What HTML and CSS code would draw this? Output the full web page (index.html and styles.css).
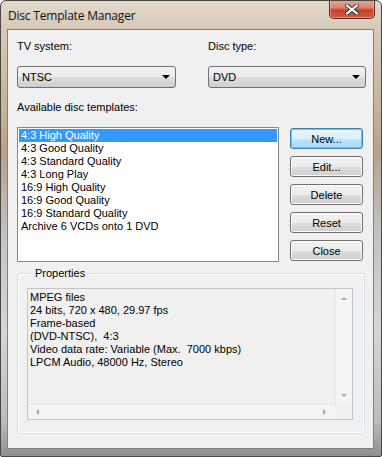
FILE: index.html
```html
<!DOCTYPE html>
<html lang="en">
<head>
    <meta charset="UTF-8">
    <title>Disc Template Manager</title>
    <link rel="stylesheet" href="styles.css">
</head>
<body>
    <div class="window">
        <div class="titlebar">
            <span class="title">Disc Template Manager</span>
            <div class="close-btn">
                <svg width="14" height="11" viewBox="0 0 14 11">
                    <path d="M2 1.5 L12 9.5 M12 1.5 L2 9.5" stroke="#2b3a4a" stroke-width="4" stroke-linecap="square"/>
                    <path d="M2 1.5 L12 9.5 M12 1.5 L2 9.5" stroke="#ffffff" stroke-width="2" stroke-linecap="square"/>
                </svg>
            </div>
        </div>

        <div class="client">
            <div class="selectors">
                <div class="field">
                    <div class="label">TV system:</div>
                    <div class="combo"><span>NTSC</span><span class="arrow"></span></div>
                </div>
                <div class="field">
                    <div class="label">Disc type:</div>
                    <div class="combo"><span>DVD</span><span class="arrow"></span></div>
                </div>
            </div>

            <div class="label list-label">Available disc templates:</div>

            <div class="templates">
                <ul class="listbox">
                    <li class="selected">4:3 High Quality</li>
                    <li>4:3 Good Quality</li>
                    <li>4:3 Standard Quality</li>
                    <li>4:3 Long Play</li>
                    <li>16:9 High Quality</li>
                    <li>16:9 Good Quality</li>
                    <li>16:9 Standard Quality</li>
                    <li>Archive 6 VCDs onto 1 DVD</li>
                </ul>
                <div class="actions">
                    <button class="btn default">New...</button>
                    <button class="btn">Edit...</button>
                    <button class="btn">Delete</button>
                    <button class="btn">Reset</button>
                    <button class="btn">Close</button>
                </div>
            </div>

            <fieldset class="properties">
                <legend>Properties</legend>
                <div class="props-box">
                    <div class="props-text">
                        <div>MPEG files</div>
                        <div>24 bits, 720 x 480, 29.97 fps</div>
                        <div>Frame-based</div>
                        <div>(DVD-NTSC),&nbsp; 4:3</div>
                        <div>Video data rate: Variable (Max.&nbsp; 7000 kbps)</div>
                        <div>LPCM Audio, 48000 Hz, Stereo</div>
                    </div>
                    <div class="vscroll">
                        <span class="tri up"></span>
                        <span class="tri down"></span>
                    </div>
                    <div class="hscroll">
                        <span class="tri left"></span>
                        <span class="tri right"></span>
                    </div>
                    <div class="corner"></div>
                </div>
            </fieldset>
        </div>
    </div>
</body>
</html>
```

FILE: styles.css
```css
* {
    margin: 0;
    padding: 0;
    box-sizing: border-box;
}

body {
    background: #ffffff;
    font-family: "Liberation Sans", Arial, sans-serif;
    font-size: 11px;
    color: #000;
}

.window {
    width: 382px;
    height: 457px;
    display: flex;
    flex-direction: column;
    border: 1px solid #4a4844;
    border-radius: 6px 6px 2px 2px;
    background: linear-gradient(to bottom, #e2d9cb 0, #d6cab7 28px, #c7b299 110px, #b9a08a 150px, #c2c2c2 230px, #d6d6d6 330px, #bcbcbc 420px, #8e8e8e 456px);
    overflow: hidden;
}

.titlebar {
    height: 28px;
    display: flex;
    justify-content: space-between;
    align-items: flex-start;
    padding-left: 7px;
}

.title {
    font-family: "Open Sans", "Noto Sans", sans-serif;
    font-size: 12px;
    line-height: 30px;
    color: #101010;
    letter-spacing: -0.2px;
}

.close-btn {
    width: 46px;
    height: 19px;
    margin-right: 6px;
    margin-top: -1px;
    display: flex;
    align-items: center;
    justify-content: center;
    border: 1px solid #5a2a20;
    border-top: none;
    border-radius: 0 0 5px 5px;
    background: linear-gradient(to bottom, #e9a999 0, #d9806b 45%, #c4432b 55%, #cf5a3c 100%);
    box-shadow: inset 0 0 0 1px rgba(255, 255, 255, 0.35);
}

.client {
    height: 420px;
    margin: 0 7px 0 6px;
    border: 1px solid #7f7f7f;
    background: #f0f0f0;
    padding: 10px 0 0 9px;
}

.label {
    line-height: 13px;
    color: #000;
}

.selectors {
    display: grid;
    grid-template-columns: 159px 158px;
    column-gap: 32px;
}

.field .label {
    margin-bottom: 13px;
}

.combo {
    height: 22px;
    display: flex;
    align-items: center;
    justify-content: space-between;
    padding: 0 5px 0 4px;
    border: 1px solid #707070;
    border-radius: 3px;
    background: linear-gradient(to bottom, #f2f2f2 0, #ebebeb 50%, #dddddd 51%, #cfcfcf 100%);
}

.arrow {
    width: 0;
    height: 0;
    border-left: 4px solid transparent;
    border-right: 4px solid transparent;
    border-top: 4px solid #000;
}

.list-label {
    margin: 13px 0 13px;
}

.templates {
    display: flex;
    gap: 11px;
}

.listbox {
    list-style: none;
    width: 262px;
    height: 135px;
    padding: 1px;
    border: 1px solid #828790;
    background: #fff;
}

.listbox li {
    line-height: 13px;
    padding-left: 2px;
}

.listbox li.selected {
    background: #3399ff;
    color: #fff;
}

.actions {
    display: flex;
    flex-direction: column;
    gap: 7px;
    padding-top: 1px;
}

.btn {
    width: 73px;
    height: 21px;
    font-family: inherit;
    font-size: 11px;
    color: #000;
    border: 1px solid #707070;
    border-radius: 3px;
    background: linear-gradient(to bottom, #f2f2f2 0, #ebebeb 50%, #dddddd 51%, #cfcfcf 100%);
    box-shadow: inset 0 0 0 1px #fcfcfc;
}

.btn.default {
    border-color: #3c7fb1;
    background: linear-gradient(to bottom, #eaf6fd 0, #d9f0fc 50%, #bee6fd 51%, #a7d9f5 100%);
    box-shadow: inset 0 0 0 1px #48d8fb;
}

.properties {
    width: 348px;
    margin-top: 5px;
    padding: 8px 11px 13px 9px;
    border: 1px solid #d5dfe5;
    border-radius: 3px;
    box-shadow: inset 0 0 0 1px #ffffff;
}

.properties legend {
    margin-left: 6px;
    padding: 0 2px;
    line-height: 13px;
}

.props-box {
    height: 132px;
    display: grid;
    grid-template-columns: 1fr 17px;
    grid-template-rows: 1fr 15px;
    border: 1px solid #c5c5c5;
    background: #f0f0f0;
}

.props-text {
    padding: 2px 0 0 2px;
    line-height: 13px;
    white-space: nowrap;
    overflow: hidden;
}

.vscroll {
    display: flex;
    flex-direction: column;
    justify-content: space-between;
    align-items: center;
    padding: 8px 0 7px;
    border-left: 1px solid #e6e6e6;
    background: #f4f4f4;
}

.hscroll {
    display: flex;
    justify-content: space-between;
    align-items: center;
    padding: 0 9px 0 8px;
    border-top: 1px solid #e6e6e6;
    background: #f4f4f4;
}

.corner {
    background: #f0f0f0;
}

.tri {
    width: 0;
    height: 0;
}

.tri.up {
    border-left: 3px solid transparent;
    border-right: 3px solid transparent;
    border-bottom: 3px solid #a8a8a8;
}

.tri.down {
    border-left: 3px solid transparent;
    border-right: 3px solid transparent;
    border-top: 3px solid #a8a8a8;
}

.tri.left {
    border-top: 3px solid transparent;
    border-bottom: 3px solid transparent;
    border-right: 3px solid #a8a8a8;
}

.tri.right {
    border-top: 3px solid transparent;
    border-bottom: 3px solid transparent;
    border-left: 3px solid #a8a8a8;
}
```
